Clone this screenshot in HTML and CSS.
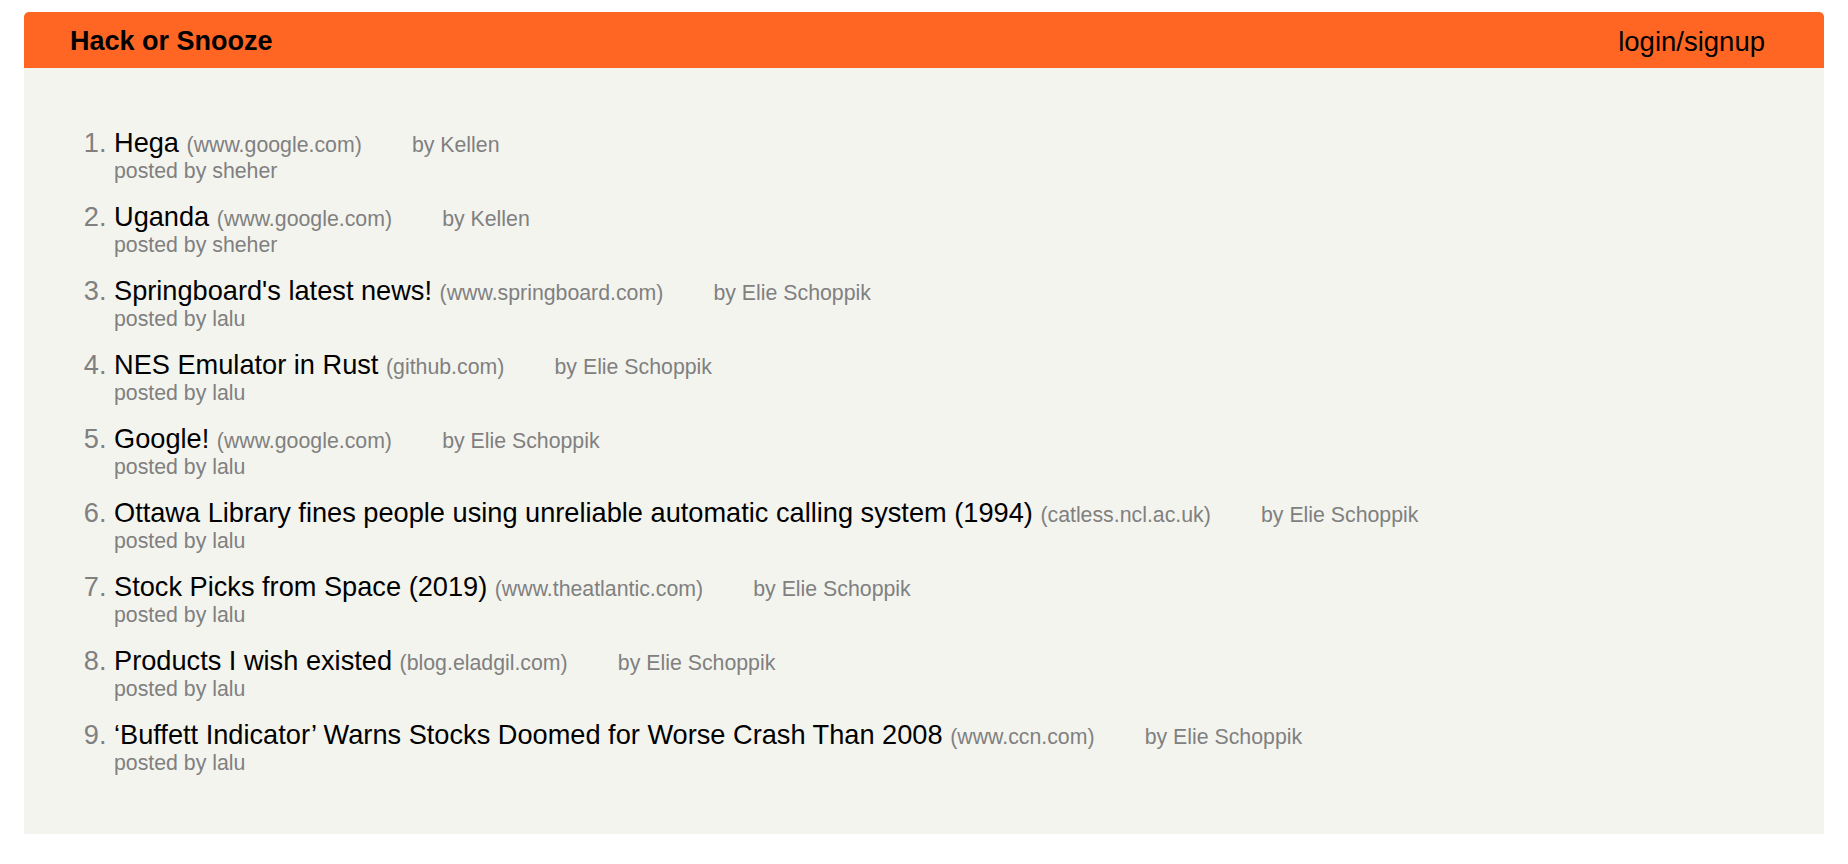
FILE: index.html
```html
<!DOCTYPE html>
<html lang="en">
<head>
<meta charset="utf-8">
<title>Hack or Snooze</title>
<link rel="stylesheet" href="styles.css">
</head>
<body>
<div class="page">
  <nav class="navbar">
    <span class="brand">Hack or Snooze</span>
    <a class="nav-login" href="#">login/signup</a>
  </nav>
  <section class="stories">
    <ol class="story-list">
      <li class="story"><a class="story-title" href="#">Hega</a> <small class="story-host">(www.google.com)</small> <small class="story-author">by Kellen</small><small class="story-user">posted by sheher</small></li>
      <li class="story"><a class="story-title" href="#">Uganda</a> <small class="story-host">(www.google.com)</small> <small class="story-author">by Kellen</small><small class="story-user">posted by sheher</small></li>
      <li class="story"><a class="story-title" href="#">Springboard's latest news!</a> <small class="story-host">(www.springboard.com)</small> <small class="story-author">by Elie Schoppik</small><small class="story-user">posted by lalu</small></li>
      <li class="story"><a class="story-title" href="#">NES Emulator in Rust</a> <small class="story-host">(github.com)</small> <small class="story-author">by Elie Schoppik</small><small class="story-user">posted by lalu</small></li>
      <li class="story"><a class="story-title" href="#">Google!</a> <small class="story-host">(www.google.com)</small> <small class="story-author">by Elie Schoppik</small><small class="story-user">posted by lalu</small></li>
      <li class="story"><a class="story-title" href="#">Ottawa Library fines people using unreliable automatic calling system (1994)</a> <small class="story-host">(catless.ncl.ac.uk)</small> <small class="story-author">by Elie Schoppik</small><small class="story-user">posted by lalu</small></li>
      <li class="story"><a class="story-title" href="#">Stock Picks from Space (2019)</a> <small class="story-host">(www.theatlantic.com)</small> <small class="story-author">by Elie Schoppik</small><small class="story-user">posted by lalu</small></li>
      <li class="story"><a class="story-title" href="#">Products I wish existed</a> <small class="story-host">(blog.eladgil.com)</small> <small class="story-author">by Elie Schoppik</small><small class="story-user">posted by lalu</small></li>
      <li class="story"><a class="story-title" href="#">‘Buffett Indicator’ Warns Stocks Doomed for Worse Crash Than 2008</a> <small class="story-host">(www.ccn.com)</small> <small class="story-author">by Elie Schoppik</small><small class="story-user">posted by lalu</small></li>
    </ol>
  </section>
</div>
</body>
</html>
```

FILE: styles.css
```css
html, body {
  margin: 0;
  padding: 0;
  background: #ffffff;
}

body {
  font-family: "Liberation Sans", Arial, Helvetica, sans-serif;
  color: #000;
}

.page {
  margin: 12px 24px 0;
  background: #f4f4ef;
  border-radius: 5px 5px 0 0;
}

.navbar {
  display: flex;
  align-items: center;
  justify-content: space-between;
  height: 56px;
  box-sizing: border-box;
  padding: 3px 59px 0 46px;
  background: #ff6624;
  border-radius: 5px 5px 0 0;
}

.brand {
  font-size: 27px;
  font-weight: bold;
  color: #000;
}

.nav-login {
  font-size: 27.5px;
  color: #000;
  text-decoration: none;
}

.stories {
  padding: 59px 0 41px 50px;
}

.story-list {
  margin: 0;
  padding: 0 0 0 40px;
}

.story {
  font-size: 27.2px;
  color: #808080;
  margin: 0 0 17px;
}

.story-title {
  color: #000;
  text-decoration: none;
}

.story-host,
.story-author,
.story-user {
  font-size: 21.3px;
  color: #808080;
}

.story-author {
  margin-left: 2em;
}

.story-user {
  display: block;
}
```
